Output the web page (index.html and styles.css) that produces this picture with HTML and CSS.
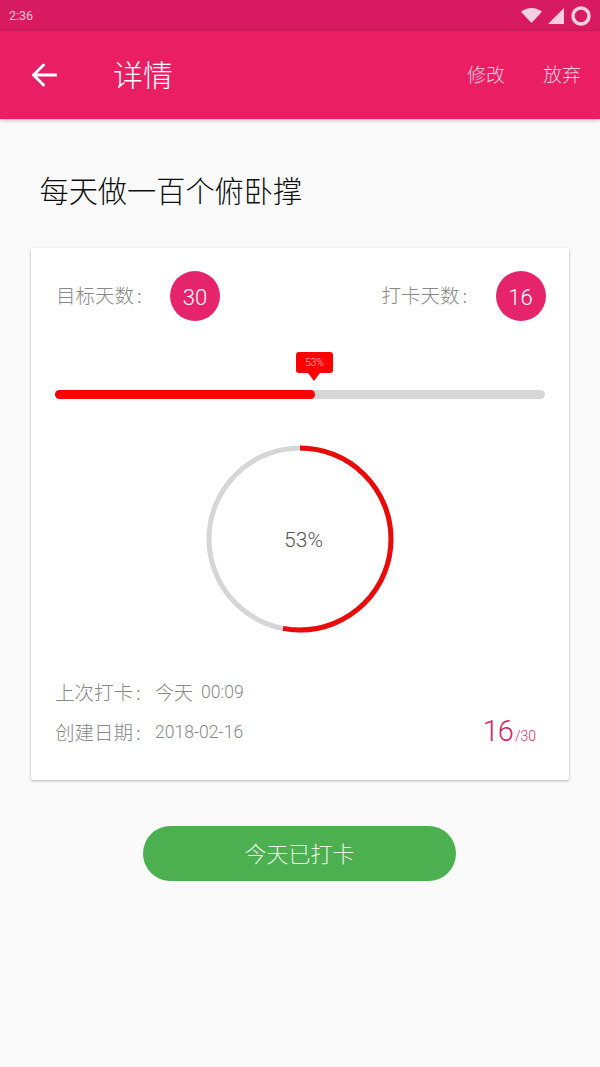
FILE: index.html
```html
<!DOCTYPE html>
<html lang="zh-CN">
<head>
<meta charset="utf-8">
<title>详情</title>
<link rel="stylesheet" href="styles.css">
</head>
<body>
<div class="screen">
  <div class="status">
    <span class="time">2:36</span>
    <div class="status-icons">
      <svg class="wifi" width="21" height="15" viewBox="0 0 21 15"><path d="M0 3.800C2.900 1.400 6.500 0 10.500 0s7.600 1.400 10.500 3.800L10.500 15z"/></svg>
      <svg class="signal" width="16" height="16" viewBox="0 0 16 16"><path d="M16 0v16H0z"/></svg>
      <svg class="battery" width="20" height="20" viewBox="0 0 20 20"><circle cx="10" cy="10" r="8"/></svg>
    </div>
  </div>
  <header class="toolbar">
    <svg class="back" width="26" height="24" viewBox="0 0 26 24"><path d="M25 12H3M12.500 2 2.500 12l10 10"/></svg>
    <h1 class="toolbar-title">详情</h1>
    <div class="actions"><span>修改</span><span>放弃</span></div>
  </header>
  <main class="content">
    <h2 class="goal">每天做一百个俯卧撑</h2>
    <section class="card">
      <div class="counts">
        <div class="count"><span class="count-label">目标天数<span class="colon">:</span></span><span class="badge">30</span></div>
        <div class="count"><span class="count-label">打卡天数<span class="colon">:</span></span><span class="badge">16</span></div>
      </div>
      <div class="bar">
        <div class="bar-fill" style="width:53%"></div>
        <div class="tip">53%</div>
      </div>
      <div class="gauge">
        <svg class="gauge-ring" width="188" height="188" viewBox="0 0 188 188">
          <circle class="ring-track" cx="94" cy="94" r="91"/>
          <circle class="ring-value" cx="94" cy="94" r="91" pathLength="100" stroke-dasharray="53 100" transform="rotate(-90 94 94)"/>
        </svg>
        <span class="gauge-text">53%</span>
      </div>
      <div class="meta">
        <div class="meta-lines">
          <div class="meta-line"><span class="meta-label">上次打卡<span class="colon">:</span></span><span class="meta-big">今天</span><span class="meta-value">00:09</span></div>
          <div class="meta-line"><span class="meta-label">创建日期<span class="colon">:</span></span><span class="meta-value">2018-02-16</span></div>
        </div>
        <div class="ratio"><span class="ratio-num">16</span><span class="ratio-den">/30</span></div>
      </div>
    </section>
    <div class="cta-row"><button class="cta">今天已打卡</button></div>
  </main>
</div>
</body>
</html>
```
FILE: styles.css
```css
* { box-sizing: border-box; margin: 0; padding: 0; }
html, body { width: 600px; height: 1067px; overflow: hidden; }
body {
  background: #fafafa;
  font-family: Roboto, "Noto Sans CJK SC", sans-serif;
  font-weight: 300;
}
.screen { height: 1067px; display: flex; flex-direction: column; }

.status {
  height: 31px;
  background: #d81b60;
  display: flex;
  align-items: center;
  justify-content: space-between;
  padding: 0 9px;
  color: #f8c6da;
}
.time { font-size: 12.500px; font-weight: 400; }
.status-icons { display: flex; align-items: center; gap: 6px; }
.wifi, .signal { fill: #f8cfe0; }
.battery { fill: none; stroke: #f8cfe0; stroke-width: 3.500; margin-left: 1px; }

.toolbar {
  position: relative;
  height: 88px;
  background: #e91e63;
  box-shadow: 0 1px 4px rgba(0, 0, 0, .3);
  display: flex;
  align-items: center;
  padding: 0 19px 0 31px;
  color: #fff;
}
.back { fill: none; stroke: #fff; stroke-width: 3; stroke-linecap: round; stroke-linejoin: round; }
.toolbar-title { font-size: 30px; font-weight: 300; margin: 1px 0 0 56px; line-height: 1; }
.actions {
  margin: 0 0 3px auto;
  display: flex;
  gap: 38px;
  font-size: 19px;
  color: #fbd0df;
}

.content { flex: 1; padding: 0 31px; }
.goal {
  font-size: 29.200px;
  font-weight: 300;
  color: #0d0d0d;
  line-height: 40px;
  padding: 53px 0 0 8.500px;
}
.card {
  margin-top: 36px;
  height: 532px;
  background: #fff;
  border-radius: 2px;
  box-shadow: 0 1px 3px rgba(0, 0, 0, .3);
  padding: 23px 24px 0;
}
.counts { display: flex; justify-content: space-between; }
.count { display: flex; align-items: center; }
.count + .count { margin-right: -.5px; }
.count-label {
  width: 115px;
  padding: 0 0 3px 1px;
  font-family: "Noto Sans CJK SC", sans-serif;
  font-size: 19.500px;
  color: #888;
}
.colon { margin-left: 3px; }
.badge {
  width: 50px;
  height: 50px;
  padding-top: 3px;
  border-radius: 50%;
  background: #e6246c;
  color: #fff;
  font-size: 22px;
  display: flex;
  align-items: center;
  justify-content: center;
}

.bar {
  position: relative;
  height: 9px;
  margin-top: 69px;
  background: #d6d6d6;
  border-radius: 5px;
}
.bar-fill { height: 100%; background: #ff0000; border-radius: 5px; }
.tip {
  position: absolute;
  left: 241px;
  top: -38px;
  width: 37px;
  height: 21px;
  background: #ff0000;
  border-radius: 3px;
  color: #ffc4c4;
  font-size: 10px;
  line-height: 21px;
  text-align: center;
}
.tip::after {
  content: "";
  position: absolute;
  left: 12px;
  top: 21px;
  border: 6px solid transparent;
  border-top: 8px solid #ff0000;
  border-bottom: 0;
}

.gauge {
  position: relative;
  width: 188px;
  height: 188px;
  margin: 46px auto 0;
  display: flex;
  align-items: center;
  justify-content: center;
}
.gauge-ring { position: absolute; inset: 0; }
.ring-track { fill: none; stroke: #d6d6d6; stroke-width: 5; }
.ring-value { fill: none; stroke: #ea0a0a; stroke-width: 5; }
.gauge-text { margin: 1px 0 0 7px; font-size: 21px; color: #555; }

.meta {
  margin-top: 44px;
  display: flex;
  justify-content: space-between;
  align-items: flex-end;
}
.meta-lines { display: flex; flex-direction: column; gap: 12px; }
.meta-line { display: flex; align-items: center; height: 28px; color: #888; }
.meta-label { width: 100px; font-family: "Noto Sans CJK SC", sans-serif; font-size: 19.500px; }
.meta-big { font-size: 19px; margin-right: 8px; }
.meta-value { padding-top: 2px; font-size: 17.600px; font-weight: 300; }
.ratio { color: #d0276b; padding-right: 9px; margin-bottom: -3px; display: flex; align-items: baseline; }
.ratio-num { font-size: 29px; letter-spacing: -1px; }
.ratio-den { font-size: 14px; margin-left: 2px; }

.cta-row { display: flex; padding: 46px 0 0 112px; }
.cta {
  width: 313px;
  height: 55px;
  padding-bottom: 3px;
  border: 0;
  border-radius: 28px;
  background: #4caf50;
  color: #e8f5e9;
  font: 300 22px Roboto, "Noto Sans CJK SC", sans-serif;
}
```
